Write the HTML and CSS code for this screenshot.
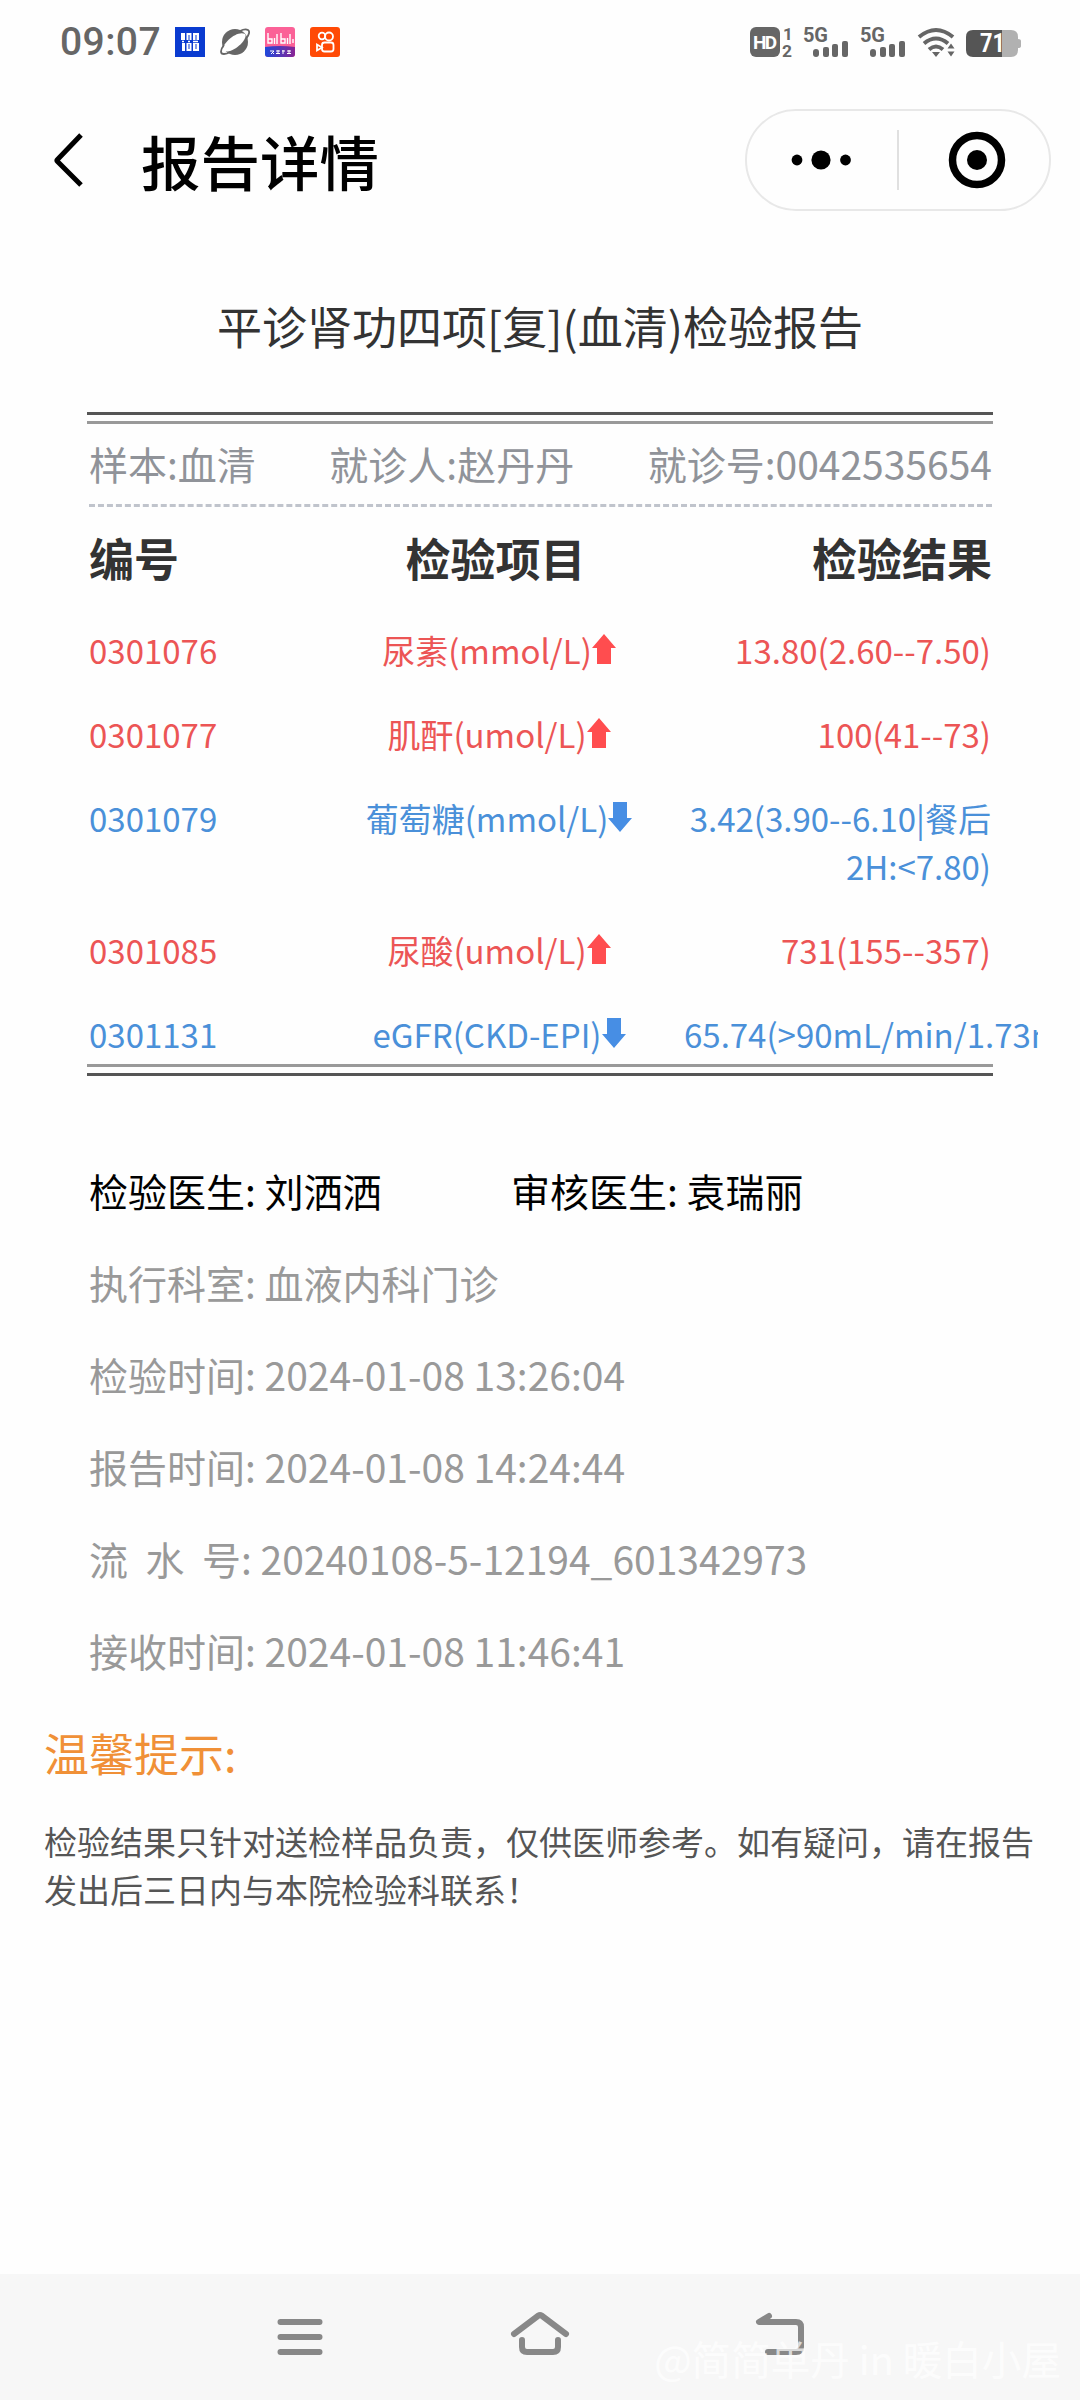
FILE: index.html
```html
<!DOCTYPE html>
<html lang="zh-CN">
<head>
    <meta charset="UTF-8">
    <meta name="viewport" content="width=device-width, initial-scale=1.0">
    <title>报告详情</title>
    <link rel="stylesheet" href="styles.css">
</head>
<body>

    <!-- Status Bar -->
    <div class="status-bar">
        <span class="time">09:07</span>
        <div class="app-icons">
            <svg width="30" height="30" viewBox="0 0 30 30">
                <rect width="30" height="30" fill="#0a3bd0"/>
                <path d="M6 6h4v7H6zM7 16h3v8H7zM11.500 6h5v7h-5zM11.500 16h5v8h-5zM18 6h6v7h-6zM18 16h6v8h-6z" fill="#fff"/>
                <path d="M14 8v5M14 17v5M21 8v5M21 17v5" stroke="#0a3bd0" stroke-width="1"/>
                <path d="M7 14.500h2M13 14.500h2M18 14.500h5" stroke="#fff" stroke-width="1.500"/>
            </svg>
            <svg width="30" height="30" viewBox="0 0 30 30">
                <circle cx="15" cy="15" r="13" fill="#666"/>
                <path d="M3 24C1 17 17 3 25 7C29 11 13 28 3 24z" fill="#fff"/>
                <path d="M4 18C0 23 0 27 4 27Q7 27 10 25M20 4Q25 1.500 28 3Q31 5 26 12" stroke="#666" stroke-width="1.800" fill="none"/>
            </svg>
            <svg width="30" height="30" viewBox="0 0 30 30">
                <defs>
                    <linearGradient id="bili" x1="0" x2="1"><stop offset="0" stop-color="#1d49dc"/><stop offset="1" stop-color="#8a2494"/></linearGradient>
                </defs>
                <rect width="30" height="30" rx="3" fill="#fb6197"/>
                <path d="M0 20q15-2 30 0v7a3 3 0 0 1-3 3H3a3 3 0 0 1-3-3z" fill="url(#bili)"/>
                <path d="M3 6v10h4v-4H3M9.500 11v6M12 7v10M16 6v10h4v-4h-4M22.500 11v6M25 7v10M28 12v4" stroke="#fff" stroke-width="1.400" fill="none"/>
                <path d="M5 24h4l-3 3M7 25l2 2M11 24h4M11 26.500h4M13 23v4M17 24h3M18 23v4M22 24h4M22 26.500h4M24 23v4" stroke="#fff" stroke-width="1" fill="none"/>
            </svg>
            <svg width="30" height="30" viewBox="0 0 30 30">
                <rect width="30" height="30" rx="3" fill="#ff4a06"/>
                <g stroke="#fff" stroke-width="1.800" fill="none">
                    <circle cx="12" cy="9" r="3.300"/>
                    <circle cx="19" cy="9.500" r="4"/>
                    <rect x="12" y="15.500" width="11.500" height="9" rx="2.500"/>
                    <path d="M12 20.500L7 17.500v6z"/>
                </g>
            </svg>
        </div>
        <div class="signal-icons">
            <svg width="272" height="34" viewBox="0 0 272 34">
                <g fill="#666">
                    <rect x="0" y="2" width="30" height="30" rx="6"/>
                    <text class="hd" x="3" y="24" textLength="24">HD</text>
                    <text class="sim" x="33" y="15">1</text>
                    <text class="sim" x="32" y="32" textLength="10" lengthAdjust="spacingAndGlyphs">2</text>
                    <text class="net" x="53" y="17" textLength="25">5G</text>
                    <rect x="63" y="24" width="6" height="8" rx="3"/>
                    <rect x="73" y="22" width="6" height="10" rx="2"/>
                    <rect x="82" y="19" width="6" height="13" rx="2"/>
                    <rect x="92" y="16" width="6" height="16" rx="2"/>
                    <text class="net" x="110" y="17" textLength="25">5G</text>
                    <rect x="120" y="24" width="6" height="8" rx="3"/>
                    <rect x="130" y="22" width="6" height="10" rx="2"/>
                    <rect x="139" y="19" width="6" height="13" rx="2"/>
                    <rect x="149" y="16" width="6" height="16" rx="2"/>
                    <path d="M182 27h8l-4 5zM197.500 23.500l3.500-5 3.500 5zM197.500 26.500l3.500 5 3.500-5z"/>
                </g>
                <g stroke="#666" stroke-width="4" fill="none">
                    <path d="M169 12q17-14 34 0M174 18.500q12-10 24 0M179 24.500q7-6 14 0"/>
                </g>
                <path d="M223 5h29v27h-29q-7 0-7-7V12q0-7 7-7z" fill="#555"/>
                <path d="M252 5h9q7 0 7 7v2q3 0 3 2v5q0 2-3 2v2q0 7-7 7h-9z" fill="#b1b1b1"/>
                <text class="battery" x="230" y="27" textLength="25" lengthAdjust="spacingAndGlyphs">71</text>
            </svg>
        </div>
    </div>

    <!-- Header -->
    <header>
        <svg class="back" width="32" height="56" viewBox="0 0 32 56">
            <path d="M28 3L4.500 27.500Q3.500 28.500 4.500 29.500L28 53" stroke="#000" stroke-width="5" fill="none"/>
        </svg>
        <h1>报告详情</h1>
        <div class="capsule">
            <svg class="more" width="60" height="20" viewBox="0 0 60 20">
                <circle cx="6" cy="10" r="5.400"/>
                <circle cx="30" cy="10" r="9.600"/>
                <circle cx="54.500" cy="10" r="5.400"/>
            </svg>
            <span class="divider"></span>
            <svg class="close" width="58" height="58" viewBox="0 0 58 58">
                <circle cx="29" cy="29" r="24.500" stroke="#000" stroke-width="7.500" fill="none"/>
                <circle cx="29" cy="29" r="10"/>
            </svg>
        </div>
    </header>

    <!-- Report -->
    <main>
        <h2 class="report-title">平诊肾功四项[复](血清)检验报告</h2>

        <div class="double-line"></div>
        <div class="patient">
            <span>样本:血清</span>
            <span>就诊人:赵丹丹</span>
            <span>就诊号:0042535654</span>
        </div>

        <div class="table-head">
            <span>编号</span>
            <span>检验项目</span>
            <span>检验结果</span>
        </div>

        <div class="table">
            <div class="row high">
                <span>0301076</span>
                <span class="item">尿素(mmol/L)<svg class="arrow" viewBox="0 0 24 30"><path d="M12 0l12 14h-5v16H5V14H0z"/></svg></span>
                <span class="result">13.80(2.60--7.50)</span>
            </div>
            <div class="row high">
                <span>0301077</span>
                <span class="item">肌酐(umol/L)<svg class="arrow" viewBox="0 0 24 30"><path d="M12 0l12 14h-5v16H5V14H0z"/></svg></span>
                <span class="result">100(41--73)</span>
            </div>
            <div class="row low">
                <span>0301079</span>
                <span class="item">葡萄糖(mmol/L)<svg class="arrow" viewBox="0 0 24 30"><path d="M12 30l12-14h-5V0H5v16H0z"/></svg></span>
                <span class="result">3.42(3.90--6.10|餐后<br>2H:&lt;7.80)</span>
            </div>
            <div class="row high">
                <span>0301085</span>
                <span class="item">尿酸(umol/L)<svg class="arrow" viewBox="0 0 24 30"><path d="M12 0l12 14h-5v16H5V14H0z"/></svg></span>
                <span class="result">731(155--357)</span>
            </div>
            <div class="row low">
                <span>0301131</span>
                <span class="item">eGFR(CKD-EPI)<svg class="arrow" viewBox="0 0 24 30"><path d="M12 30l12-14h-5V0H5v16H0z"/></svg></span>
                <span class="result long">65.74(&gt;90mL/min/1.73m</span>
            </div>
        </div>
        <div class="double-line bottom"></div>

        <!-- Details -->
        <div class="details">
            <div class="doctors">
                <span>检验医生: 刘洒洒</span>
                <span>审核医生: 袁瑞丽</span>
            </div>
            <p>执行科室: 血液内科门诊</p>
            <p>检验时间: 2024-01-08 13:26:04</p>
            <p>报告时间: 2024-01-08 14:24:44</p>
            <p>流&nbsp;&nbsp;水&nbsp;&nbsp;号: 20240108-5-12194_601342973</p>
            <p>接收时间: 2024-01-08 11:46:41</p>
        </div>

        <!-- Tips -->
        <div class="tips">
            <h3>温馨提示:</h3>
            <p>检验结果只针对送检样品负责，仅供医师参考。如有疑问，请在报告<br>发出后三日内与本院检验科联系！</p>
        </div>
    </main>

    <!-- System Navigation -->
    <nav>
        <svg width="60" height="60" viewBox="0 0 60 60">
            <path d="M10.500 14h39M10.500 29h39M10.500 44h39"/>
        </svg>
        <svg width="60" height="60" viewBox="0 0 60 60">
            <path d="M4 26L28.500 7.500q1.500-1 3 0L56 26M12 32v7q0 5 5 5h26q5 0 5-5v-7"/>
        </svg>
        <svg width="60" height="60" viewBox="0 0 60 60">
            <path d="M19 8L9 14h37q5 0 5 5v20q0 5-5 5H18"/>
        </svg>
        <span class="watermark">@简简单丹 in 暖白小屋</span>
    </nav>

</body>
</html>
```
FILE: styles.css
```css
body {
    margin: 0;
    height: 2400px;
    display: flex;
    flex-direction: column;
    background-color: #fefefe;
    color: #333;
    font-family: "Noto Sans CJK SC", sans-serif;
    overflow: hidden;
}

h1, h2, h3, p {
    margin: 0;
    font-weight: normal;
}

svg {
    flex-shrink: 0;
    display: block;
}

/* Status Bar */
.status-bar {
    display: flex;
    align-items: center;
    height: 84px;
    padding: 0 58px 0 60px;
}

.time {
    width: 115px;
    color: #666;
    font-family: Roboto, sans-serif;
    font-size: 39px;
    font-weight: 500;
    letter-spacing: 0.4px;
}

.app-icons {
    display: flex;
    gap: 15px;
}

.signal-icons {
    margin-left: auto;
}

.signal-icons svg {
    overflow: visible;
}

.signal-icons text {
    font-family: Roboto, sans-serif;
    font-weight: bold;
}

.signal-icons .hd {
    fill: #fff;
    font-size: 19px;
}

.signal-icons .sim {
    font-size: 17px;
}

.signal-icons .net {
    font-size: 20px;
}

.signal-icons .battery {
    fill: #fff;
    font-size: 25px;
}

/* Header */
header {
    display: flex;
    align-items: center;
    height: 152px;
    padding: 0 29px 0 53px;
}

header h1 {
    margin-left: 56px;
    color: #000;
    font-size: 59.5px;
    font-weight: 500;
    line-height: 80px;
}

.capsule {
    display: flex;
    align-items: center;
    box-sizing: border-box;
    width: 306px;
    height: 102px;
    margin-left: auto;
    padding-left: 44px;
    border: 2px solid #e8e8e8;
    border-radius: 51px;
}

.divider {
    width: 2px;
    height: 60px;
    margin: 0 49px 0 46px;
    background-color: #e0e0e0;
}

/* Report */
main {
    flex: 1;
}

.report-title {
    margin-top: 57px;
    font-size: 45px;
    line-height: 66px;
    text-align: center;
}

.double-line {
    box-sizing: border-box;
    height: 12px;
    margin: 53px 87px 0;
    border-top: 3px solid #555;
    border-bottom: 3px solid #999;
}

.patient {
    display: flex;
    justify-content: space-between;
    margin: 0 88px 0 89px;
    padding: 11px 0 12px;
    border-bottom: 3px dashed #c0c4cc;
    color: #909399;
    font-size: 39px;
    line-height: 57px;
}

.table-head {
    display: flex;
    justify-content: space-between;
    margin: 18px 88px 35px 89px;
    font-size: 45px;
    font-weight: bold;
    line-height: 66px;
}

.table {
    margin: 0 42px 0 89px;
    overflow: hidden;
}

.row {
    display: grid;
    grid-template-columns: 226px 368px 308px;
    margin-bottom: 36px;
    font-size: 33px;
    line-height: 48px;
}

.row:last-child {
    margin-bottom: 0;
}

.item {
    display: flex;
    justify-content: center;
}

.result {
    text-align: right;
}

.result.long {
    margin-left: 1px;
    text-align: left;
    white-space: nowrap;
}

.high {
    color: #ec5555;
}

.low {
    color: #4a90d9;
}

.arrow {
    width: 24px;
    height: 30px;
    margin-top: 8px;
}

.high .arrow {
    fill: #ff4d4f;
}

.low .arrow {
    fill: #478ee4;
}

.double-line.bottom {
    margin-top: 6px;
    border-top-color: #999;
    border-bottom-color: #555;
}

/* Details */
.details {
    margin: 68px 88px 0 89px;
    color: #999;
    font-size: 39px;
    line-height: 92px;
}

.doctors {
    display: flex;
    color: #000;
}

.doctors span:first-child {
    width: 422px;
}

/* Tips */
.tips {
    margin: 24px 44px 0;
}

.tips h3 {
    color: #f09037;
    font-size: 45px;
    line-height: 66px;
}

.tips p {
    margin-top: 31px;
    color: #555;
    font-size: 33px;
    line-height: 48px;
    white-space: nowrap;
}

/* System Navigation */
nav {
    position: relative;
    display: flex;
    justify-content: center;
    gap: 180px;
    box-sizing: border-box;
    height: 126px;
    padding-top: 32px;
    background-color: #f7f7f7;
}

nav svg {
    margin-top: 2px;
    fill: none;
    stroke: #888;
    stroke-width: 6;
    stroke-linecap: round;
    stroke-linejoin: round;
}

.watermark {
    position: absolute;
    right: 19px;
    bottom: 14px;
    color: rgba(255, 255, 255, 0.7);
    font-size: 39.6px;
    line-height: 57px;
}
```
